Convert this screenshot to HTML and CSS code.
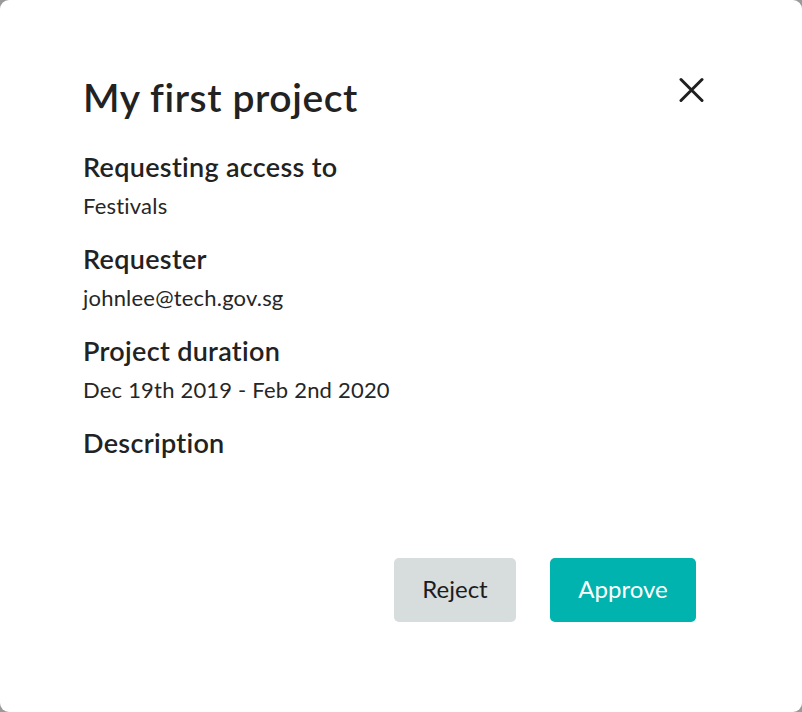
FILE: index.html
```html
<!DOCTYPE html>
<html>
<head>
<meta charset="utf-8">
<link rel="stylesheet" href="styles.css">
</head>
<body>
<div class="modal">
  <div class="header">
    <h1 class="title">My first project</h1>
    <button class="close" aria-label="Close">
      <svg width="25" height="26" viewBox="0 0 25 26"><path d="M2 2.5 L23 23.5 M23 2.5 L2 23.5" stroke="#1f1f1f" stroke-width="3" stroke-linecap="round"/></svg>
    </button>
  </div>
  <div class="field">
    <div class="label">Requesting access to</div>
    <div class="value">Festivals</div>
  </div>
  <div class="field">
    <div class="label">Requester</div>
    <div class="value">johnlee@tech.gov.sg</div>
  </div>
  <div class="field">
    <div class="label">Project duration</div>
    <div class="value">Dec 19th 2019 - Feb 2nd 2020</div>
  </div>
  <div class="field">
    <div class="label">Description</div>
  </div>
  <div class="actions">
    <button class="btn reject">Reject</button>
    <button class="btn approve">Approve</button>
  </div>
</div>
</body>
</html>
```
FILE: styles.css
```css
html, body { margin: 0; padding: 0; }
body {
  background: #9a9a9a;
  width: 802px;
  height: 712px;
  font-family: Lato, "Noto Sans", sans-serif;
  color: #222;
}
.modal {
  box-sizing: border-box;
  width: 802px;
  height: 712px;
  background: #fff;
  border-radius: 9px;
  padding: 69px 106px 0 83px;
  display: flex;
  flex-direction: column;
}
.header {
  display: flex;
  justify-content: space-between;
  align-items: flex-start;
  margin-bottom: 26px;
}
.title {
  margin: 0;
  font-size: 39px;
  letter-spacing: 0.6px;
  font-weight: 600;
  line-height: 56px;
}
.close {
  background: none;
  border: 0;
  padding: 0;
  margin: 8px -8px 0 0;
  display: flex;
}
.field { margin-bottom: 21px; }
.label {
  font-size: 27px;
  letter-spacing: 0.3px;
  font-weight: 600;
  line-height: 32px;
}
.value {
  font-size: 22px;
  letter-spacing: 0.2px;
  line-height: 32px;
  margin-top: 7px;
  color: #262626;
}
.actions {
  display: flex;
  justify-content: flex-end;
  gap: 34px;
  margin-top: 78px;
}
.btn {
  height: 64px;
  border: 0;
  border-radius: 5px;
  padding: 0 0 3px;
  font-family: inherit;
  font-size: 24px;
}
.reject { width: 122px; background: #d6dddc; color: #1c1c1c; }
.approve { width: 146px; background: #00b3ae; color: #fff; }
```
